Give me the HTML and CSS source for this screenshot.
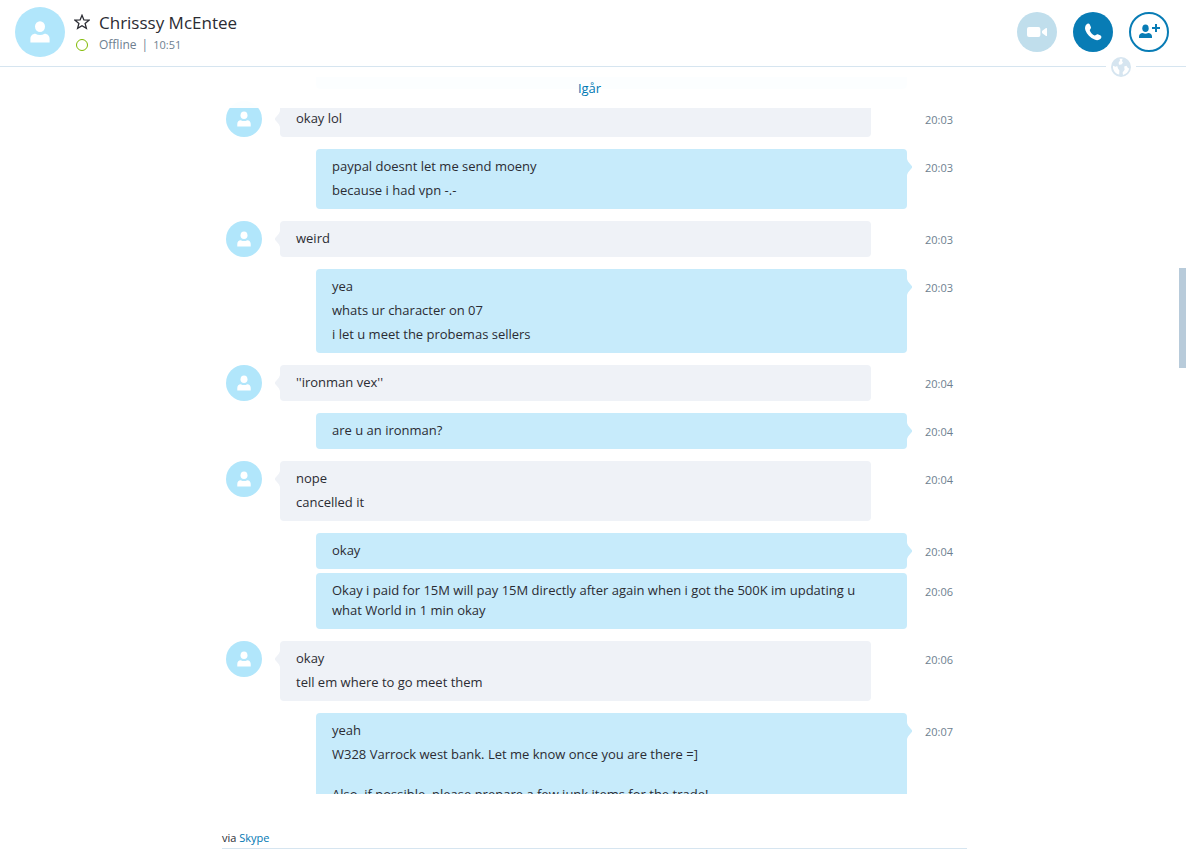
FILE: index.html
```html
<!DOCTYPE html>
<html lang="sv">
<head>
  <meta charset="UTF-8" />
  <meta name="viewport" content="width=device-width, initial-scale=1.0" />
  <title>Skype</title>
  <link rel="stylesheet" href="styles.css">
</head>
<body>
  <svg class="symbols" aria-hidden="true">
    <symbol id="person" viewBox="0 0 20 22">
      <ellipse cx="10" cy="5.6" rx="5" ry="5.4" />
      <path d="M0.4 21.6 V18 C0.4 15 2.4 12.8 5.4 12.8 C8.2 14.4 11.8 14.4 14.6 12.8 C17.6 12.8 19.6 15 19.6 18 V21.6 Z" />
    </symbol>
  </svg>

  <header class="header">
    <div class="avatar avatar-large"><svg><use href="#person" /></svg></div>
    <div class="contact">
      <button class="star" aria-label="Favorit">
        <svg viewBox="0 0 16 16"><path d="M8 1.3 L9.9 5.9 L15 6.2 L11.1 9.4 L12.4 14.4 L8 11.7 L3.6 14.4 L4.9 9.4 L1 6.2 L6.1 5.9 Z" /></svg>
      </button>
      <h1>Chrisssy McEntee</h1>
      <span class="presence"></span>
      <p class="status"><span>Offline</span><span>|</span><span>10:51</span></p>
    </div>
    <div class="actions">
      <button class="round video" aria-label="Videosamtal" disabled>
        <svg viewBox="0 0 20 20"><rect x="0" y="5" width="13.4" height="10" rx="2" /><path d="M15 9 L19 6 Q20 5.600 20 6.600 V13.400 Q20 14.400 19 14 L15 11 Z" /></svg>
      </button>
      <button class="round call" aria-label="Ring">
        <svg viewBox="0 0 20 20"><path d="M3.400 2.400 C4.600 1.200 6 1.200 6.800 2.400 L8 5.200 C8.400 6.400 6.600 7.400 6.800 8.400 C7.400 10.400 9.600 12.800 11.600 13.400 C12.600 13.600 13.400 11.800 14.800 12.200 L17.600 13.600 C18.800 14.400 18.600 16 17.400 17 C16 18.200 14 18.600 11.600 17.600 C7.200 15.800 4 12.400 2.400 8.200 C1.600 5.800 2.200 3.600 3.400 2.400 Z" /></svg>
      </button>
      <button class="round add" aria-label="Lägg till personer">
        <svg viewBox="0 0 22 20"><ellipse cx="7.500" cy="6.200" rx="3.200" ry="3.800" /><path d="M1 16 V14.500 C1 12.200 2.600 11 4.800 11 C6.400 12 8.600 12 10.200 11 C12.400 11 14 12.200 14 14.500 V16 Z" /><path d="M17 2 h2 v3 h3 v2 h-3 v3 h-2 v-3 h-3 v-2 h3 Z" /></svg>
      </button>
    </div>
    <span class="globe">
      <svg viewBox="0 0 20 20">
        <circle cx="10" cy="10" r="10" />
        <path d="M7.600 5.800 L9 3.600 L8.600 1.800 L11.600 1.800 L11 4 L12 5.800 L10.400 7.600 L8 7.800 Z M2 8.800 L4.600 9.800 L6.200 9 L7 11.600 L8.400 13.600 L8.200 17.600 C5 17 2.400 14 2 10.800 Z M13.200 9.400 L15.400 8.800 L17 11 L18.200 11.600 C17.600 14.800 15 17.400 12 18 L11.600 15.400 L13.600 12.800 Z" />
      </svg>
    </span>
  </header>

  <main class="chat">
    <div class="date"><a href="#">Igår</a></div>
    <ol class="messages">
      <li class="row mine earlier"><div class="bubble"></div></li>
      <li class="row theirs">
        <div class="avatar"><svg><use href="#person" /></svg></div>
        <div class="bubble tail"><p>okay lol</p></div>
        <time>20:03</time>
      </li>
      <li class="row mine">
        <div class="bubble tail"><p>paypal doesnt let me send moeny</p><p>because i had vpn -.-</p></div>
        <time>20:03</time>
      </li>
      <li class="row theirs">
        <div class="avatar"><svg><use href="#person" /></svg></div>
        <div class="bubble tail"><p>weird</p></div>
        <time>20:03</time>
      </li>
      <li class="row mine">
        <div class="bubble tail"><p>yea</p><p>whats ur character on 07</p><p>i let u meet the probemas sellers</p></div>
        <time>20:03</time>
      </li>
      <li class="row theirs">
        <div class="avatar"><svg><use href="#person" /></svg></div>
        <div class="bubble tail"><p>''ironman vex''</p></div>
        <time>20:04</time>
      </li>
      <li class="row mine">
        <div class="bubble tail"><p>are u an ironman?</p></div>
        <time>20:04</time>
      </li>
      <li class="row theirs">
        <div class="avatar"><svg><use href="#person" /></svg></div>
        <div class="bubble tail"><p>nope</p><p>cancelled it</p></div>
        <time>20:04</time>
      </li>
      <li class="row mine">
        <div class="bubble tail"><p>okay</p></div>
        <time>20:04</time>
      </li>
      <li class="row mine follow">
        <div class="bubble"><p>Okay i paid for 15M will pay 15M directly after again when i got the 500K im updating u what World in 1 min okay</p></div>
        <time>20:06</time>
      </li>
      <li class="row theirs">
        <div class="avatar"><svg><use href="#person" /></svg></div>
        <div class="bubble tail"><p>okay</p><p>tell em where to go meet them</p></div>
        <time>20:06</time>
      </li>
      <li class="row mine">
        <div class="bubble tail"><p>yeah</p><p>W328 Varrock west bank. Let me know once you are there =]<br><br>Also, if possible, please prepare a few junk items for the trade!</p></div>
        <time>20:07</time>
      </li>
    </ol>
    <div class="scroll-thumb"></div>
  </main>

  <footer class="footer">
    <p class="via">via <a href="#">Skype</a></p>
  </footer>
</body>
</html>
```
FILE: styles.css
```css
* {
  box-sizing: border-box;
}
body {
  display: flex;
  flex-direction: column;
  height: 100vh;
  margin: 0;
  overflow: hidden;
  background: #fff;
  color: #2b2c33;
  font-family: "Open Sans", "Noto Sans", sans-serif;
  font-size: 13px;
  line-height: 20px;
}
h1, p, ol {
  margin: 0;
  padding: 0;
}
a {
  color: #0078b3;
  text-decoration: none;
}
button {
  padding: 0;
  border: none;
  background: none;
}
svg {
  display: block;
}
.symbols {
  position: absolute;
  width: 0;
  height: 0;
}

/* header */
.header {
  position: relative;
  display: flex;
  flex: none;
  align-items: center;
  height: 67px;
  padding: 0 17px 2px 15px;
  border-bottom: 1px solid #d6e5f0;
}
.avatar {
  display: flex;
  flex: none;
  align-items: center;
  justify-content: center;
  width: 36px;
  height: 36px;
  border-radius: 50%;
  background: #b1e6fb;
}
.avatar svg {
  width: 14px;
  height: 16px;
  fill: #fff;
}
.avatar-large {
  width: 50px;
  height: 50px;
}
.avatar-large svg {
  width: 20px;
  height: 22px;
}
.contact {
  display: grid;
  grid-template-columns: 16px auto;
  column-gap: 9px;
  align-items: center;
  justify-items: center;
  margin-left: 9px;
  padding-top: 2px;
}
.contact h1 {
  justify-self: start;
  font-size: 17px;
  font-weight: 400;
  line-height: 24px;
}
.star {
  padding-bottom: 3px;
}
.star svg {
  width: 16px;
  height: 16px;
  fill: none;
  stroke: #2b2c33;
  stroke-width: 1.3;
}
.presence {
  width: 12px;
  height: 12px;
  border: 1px solid #7fba00;
  border-radius: 50%;
}
.status {
  display: flex;
  gap: 5px;
  justify-self: start;
  color: #6e7f90;
  font-size: 12px;
}
.status span:last-child {
  font-size: 11px;
}
.actions {
  display: flex;
  gap: 16px;
  margin-left: auto;
}
.round {
  display: flex;
  align-items: center;
  justify-content: center;
  width: 40px;
  height: 40px;
  border-radius: 50%;
}
.round svg {
  width: 20px;
  height: 20px;
  fill: #fff;
}
.video {
  background: #c0deec;
}
.call {
  background: #087cb5;
}
.add {
  border: 2px solid #087cb5;
}
.add svg {
  width: 22px;
  fill: #087cb5;
}
.globe {
  position: absolute;
  right: 50px;
  bottom: -11px;
  padding: 0 5px;
  background: #fff;
}
.globe svg {
  width: 20px;
  height: 20px;
}
.globe circle {
  fill: #d6e5f0;
}
.globe path {
  fill: #fff;
}

/* conversation */
.chat {
  position: relative;
  flex: 1;
  min-height: 0;
  margin-top: 10px;
  padding-right: 7px;
  overflow: hidden;
}
.date {
  position: absolute;
  z-index: 1;
  top: 0;
  left: 0;
  right: 7px;
  height: 31px;
  background: rgba(255, 255, 255, 0.95);
  line-height: 22px;
  text-align: center;
}
.messages {
  display: flex;
  flex-direction: column;
  gap: 12px;
  max-width: 727px;
  margin: 0 auto;
  list-style: none;
}
.row {
  display: flex;
  align-items: flex-start;
}
.follow {
  margin-top: -8px;
}
.bubble {
  position: relative;
  display: flex;
  flex: 1;
  flex-direction: column;
  gap: 4px;
  padding: 7px 32px 9px 16px;
  border-radius: 4px;
}
.theirs .bubble {
  margin: 0 36px 0 18px;
  background: #eff2f7;
}
.mine .bubble {
  margin-left: 90px;
  background: #c7ebfb;
}
.earlier .bubble {
  height: 12px;
  margin-right: 46px;
  padding: 0;
  border-radius: 0 0 4px 4px;
}
.tail::after {
  content: "";
  position: absolute;
  top: 10px;
  width: 5px;
  height: 16px;
}
.mine .tail::after {
  right: -5px;
  background: #c7ebfb;
  clip-path: polygon(0 0, 20% 15%, 100% 45%, 100% 55%, 20% 85%, 0 100%);
}
.theirs .tail::after {
  left: -5px;
  background: #eff2f7;
  clip-path: polygon(100% 0, 80% 15%, 0 45%, 0 55%, 80% 85%, 100% 100%);
}
time {
  width: 46px;
  padding-top: 9px;
  color: #6e7f90;
  font-size: 11px;
  text-align: right;
}
.scroll-thumb {
  position: absolute;
  top: 191px;
  right: 0;
  width: 7px;
  height: 100px;
  background: #b8cbda;
}

/* compose area */
.footer {
  flex: none;
  height: 57px;
  padding: 34px 219px 0 222px;
}
.via {
  border-bottom: 1px solid #d6e5f0;
  font-size: 11px;
}
```
